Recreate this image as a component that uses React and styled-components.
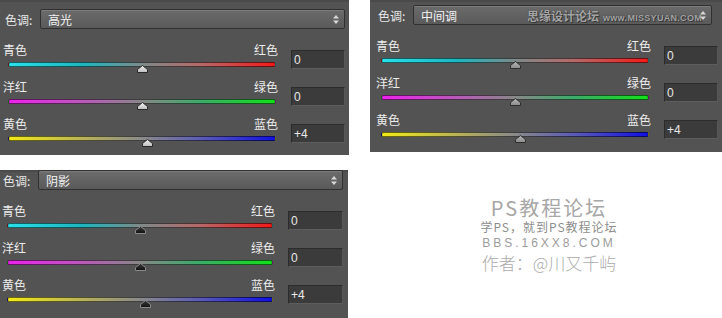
import React from 'react';
import styled, { createGlobalStyle } from 'styled-components';

const GlobalStyle = createGlobalStyle`
  html, body { margin: 0; padding: 0; background: #ffffff; }
  body { font-family: "Liberation Sans", "Noto Sans CJK SC", sans-serif; }
`;

const Page = styled.div`
  display: grid;
  grid-template-columns: 349px 352px;
  grid-template-rows: 155px 148px;
  column-gap: 21px;
  row-gap: 15px;
  width: 722px;
  height: 318px;
  overflow: hidden;
`;

const Panel = styled.section`
  width: ${(p) => p.$w}px;
  height: ${(p) => p.$h}px;
  align-self: start;
  box-sizing: border-box;
  background: #535353;
  box-shadow: inset 0 2px 0 #4a4a4a;
  padding-top: ${(p) => p.$top}px;
  display: flex;
  flex-direction: column;
`;

const Header = styled.div`
  display: flex;
  align-items: center;
  height: 20px;
  padding-left: ${(p) => p.$left}px;
  padding-right: ${(p) => p.$right}px;
  margin-bottom: 14px;
`;

const HeaderLabel = styled.span`
  width: 35px;
  flex: none;
  font-family: "Noto Sans CJK SC", sans-serif;
  font-size: 12px;
  color: #e8e8e8;
`;

const Select = styled.div`
  flex: 1;
  height: 20px;
  box-sizing: border-box;
  display: flex;
  align-items: center;
  border: 1px solid #303030;
  border-radius: 2px;
  background: linear-gradient(#6b6b6b, #5a5a5a);
  box-shadow: inset 0 1px 0 rgba(255, 255, 255, 0.12);
  padding: 0 5px 0 7px;
  color: #f2f2f2;
  font-family: "Noto Sans CJK SC", sans-serif;
  font-size: 12px;
`;

const SelectText = styled.span`
  flex: 1;
`;

const Mark = styled.span`
  display: flex;
  align-items: baseline;
  gap: 4px;
  margin-right: -2px;
  color: #a4a4a4;
  text-shadow: 0 0 1px #2a2a2a, 1px 1px 0 #3a3a3a;
`;

const MarkCn = styled.span`
  font-family: "Noto Sans CJK SC", sans-serif;
  font-size: 12px;
  font-weight: 700;
`;

const MarkEn = styled.span`
  font-family: "Liberation Sans", sans-serif;
  font-size: 9px;
  font-weight: 700;
  letter-spacing: 0.3px;
`;

const Arrows = styled.svg`
  flex: none;
  display: block;
`;

const Rows = styled.div`
  display: flex;
  flex-direction: column;
  padding-left: ${(p) => p.$left}px;
  padding-right: ${(p) => p.$right}px;
`;

const Row = styled.div`
  display: grid;
  grid-template-columns: 1fr ${(p) => p.$box}px;
  column-gap: 13px;
  height: 37px;
`;

const SliderCol = styled.div`
  display: flex;
  flex-direction: column;
`;

const Labels = styled.div`
  display: flex;
  justify-content: space-between;
  font-family: "Noto Sans CJK SC", sans-serif;
  font-size: 12px;
  line-height: 14px;
  color: #ececec;
`;

const TrackWrap = styled.div`
  position: relative;
  margin: 5px 2px 0 5px;
  height: 5px;
`;

const Track = styled.div`
  height: 5px;
  box-sizing: border-box;
  border-radius: 3px;
  border: 1px solid rgba(0, 0, 0, 0.55);
  background: ${(p) => p.$gradient};
`;

const Thumb = styled.svg`
  position: absolute;
  top: 3px;
  margin-left: -5.5px;
  display: block;
`;

const ValueBox = styled.div`
  margin-top: 7px;
  height: 19px;
  box-sizing: border-box;
  background: #3b3b3b;
  border: 1px solid #2c2c2c;
  border-bottom-color: #5d5d5d;
  border-right-color: #575757;
  color: #e8e8e8;
  font-size: 12px;
  line-height: 17px;
  padding: 1px 0 0 2px;
`;

const Watermark = styled.div`
  display: flex;
  flex-direction: column;
  align-items: center;
  padding-top: 27px;
  padding-left: 6px;
`;

const WmTitle = styled.div`
  font-family: "Noto Sans CJK SC", sans-serif;
  font-size: 20px;
  line-height: 22px;
  letter-spacing: 2px;
  color: #a7a7a7;
`;

const WmSub = styled.div`
  margin-top: 1px;
  font-family: "Noto Sans CJK SC", sans-serif;
  font-size: 12px;
  line-height: 14px;
  letter-spacing: 1px;
  color: #8e8e8e;
`;

const WmUrl = styled.div`
  margin-top: 2px;
  font-family: "Liberation Sans", sans-serif;
  font-size: 12px;
  line-height: 14px;
  letter-spacing: 3px;
  color: #9c9c9c;
`;

const WmAuthor = styled.div`
  margin-top: 2px;
  font-family: "Noto Sans CJK SC", sans-serif;
  font-weight: 300;
  font-size: 17px;
  line-height: 22px;
  color: #ababab;
`;

const ROWS = [
  {
    left: '青色',
    right: '红色',
    gradient:
      'linear-gradient(to right, #2ae0e8 0%, #1eb6be 28%, #7f8a8a 50%, #b46a6a 72%, #f21a1a 100%)',
  },
  {
    left: '洋红',
    right: '绿色',
    gradient:
      'linear-gradient(to right, #ec22ec 0%, #b85ab8 28%, #888888 50%, #3eaa6a 72%, #12e01a 100%)',
  },
  {
    left: '黄色',
    right: '蓝色',
    gradient:
      'linear-gradient(to right, #f2ea18 0%, #b8b25a 28%, #8a8a8a 50%, #5c5cb4 72%, #1010e4 100%)',
  },
];

const THUMBS = {
  light: { top: '#f4f4f4', bottom: '#bdbdbd', stroke: '#2a2a2a' },
  mid: { top: '#b8b8b8', bottom: '#8a8a8a', stroke: '#2e2e2e' },
  dark: { top: '#3a3a3a', bottom: '#111111', stroke: '#8a8a8a' },
};

const PANELS = [
  {
    id: 'p1',
    w: 349, h: 155, top: 9,
    headLeft: 5, headRight: 4,
    rowLeft: 3, rowRight: 4, box: 54,
    mode: '高光', thumb: 'light', mark: false,
  },
  {
    id: 'p2',
    w: 352, h: 152, top: 5,
    headLeft: 8, headRight: 10,
    rowLeft: 6, rowRight: 4, box: 54,
    mode: '中间调', thumb: 'mid', mark: true,
  },
  {
    id: 'p3',
    w: 348, h: 148, top: 0,
    headLeft: 3, headRight: 5,
    rowLeft: 2, rowRight: 5, box: 55,
    mode: '阴影', thumb: 'dark', mark: false,
  },
];

const VALUES = [0, 0, 4];

function ThumbIcon({ value, variant, id }) {
  const c = THUMBS[variant];
  const gid = `g-${id}`;
  return (
    <Thumb width="11" height="8" viewBox="0 0 11 8" style={{ left: `${(value + 100) / 2}%` }}>
      <defs>
        <linearGradient id={gid} x1="0" y1="0" x2="0" y2="1">
          <stop offset="0" stopColor={c.top} />
          <stop offset="1" stopColor={c.bottom} />
        </linearGradient>
      </defs>
      <path d="M5.5 0.5 L10.5 4.5 L10.5 7.5 L0.5 7.5 L0.5 4.5 Z" fill={`url(#${gid})`} stroke={c.stroke} strokeWidth="1" />
    </Thumb>
  );
}

function ColorPanel({ cfg }) {
  return (
    <Panel $w={cfg.w} $h={cfg.h} $top={cfg.top}>
      <Header $left={cfg.headLeft} $right={cfg.headRight}>
        <HeaderLabel>色调:</HeaderLabel>
        <Select>
          <SelectText>{cfg.mode}</SelectText>
          {cfg.mark && (
            <Mark>
              <MarkCn>思缘设计论坛</MarkCn>
              <MarkEn>www.MISSYUAN.COM</MarkEn>
            </Mark>
          )}
          <Arrows width="6" height="9" viewBox="0 0 6 9">
            <path d="M3 0 L6 3.5 L0 3.5 Z" fill="#d8d8d8" />
            <path d="M0 5.5 L6 5.5 L3 9 Z" fill="#d8d8d8" />
          </Arrows>
        </Select>
      </Header>
      <Rows $left={cfg.rowLeft} $right={cfg.rowRight}>
        {ROWS.map((r, i) => (
          <Row key={r.left} $box={cfg.box}>
            <SliderCol>
              <Labels>
                <span>{r.left}</span>
                <span>{r.right}</span>
              </Labels>
              <TrackWrap>
                <Track $gradient={r.gradient} />
                <ThumbIcon value={VALUES[i]} variant={cfg.thumb} id={`${cfg.id}-${i}`} />
              </TrackWrap>
            </SliderCol>
            <ValueBox>{VALUES[i] > 0 ? `+${VALUES[i]}` : VALUES[i]}</ValueBox>
          </Row>
        ))}
      </Rows>
    </Panel>
  );
}

export default function App() {
  return (
    <>
      <GlobalStyle />
      <Page>
        <ColorPanel cfg={PANELS[0]} />
        <ColorPanel cfg={PANELS[1]} />
        <ColorPanel cfg={PANELS[2]} />
        <Watermark>
          <WmTitle>PS教程论坛</WmTitle>
          <WmSub>学PS，就到PS教程论坛</WmSub>
          <WmUrl>BBS.16XX8.COM</WmUrl>
          <WmAuthor>作者：@川又千屿</WmAuthor>
        </Watermark>
      </Page>
    </>
  );
}
